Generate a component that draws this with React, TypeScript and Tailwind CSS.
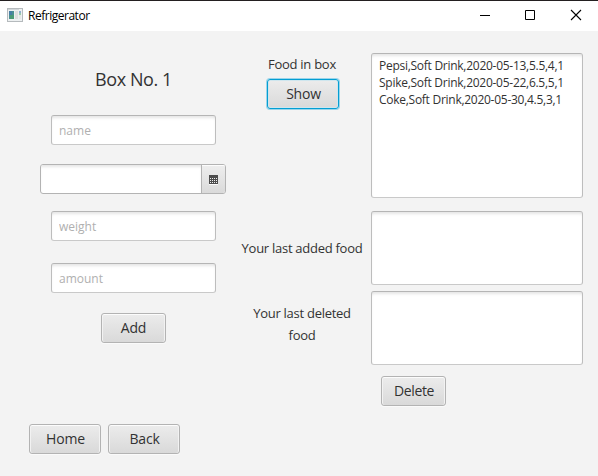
import type { ReactNode } from "react";

function Button({ children, className = "", focused = false }: { children: ReactNode; className?: string; focused?: boolean }) {
  const edge = focused
    ? "border-[#039ed3] shadow-[0_0_0_1px_#9bd5ea,inset_0_0_0_1px_#cfe6ee]"
    : "border-[#b3b3b3] shadow-[inset_0_1px_0_#fcfcfc,inset_1px_0_0_#f2f2f2,inset_-1px_0_0_#f2f2f2,0_1px_0_#fafafa]";
  return (
    <button
      className={`flex h-[30px] shrink-0 items-center justify-center whitespace-nowrap rounded-[3px] border bg-linear-to-b from-[#ececec] to-[#d9d9d9] pl-px text-[14px] leading-[20px] tracking-[-0.2px] text-[#323232] ${edge} ${className}`}
    >
      {children}
    </button>
  );
}

const fieldEdge =
  "rounded-[3px] border border-t-[#b5b5b5] border-x-[#bdbdbd] border-b-[#c9c9c9] bg-white shadow-[inset_0_3px_3px_-1px_#e6e6e6]";

function Field({ placeholder, className = "" }: { placeholder: string; className?: string }) {
  return (
    <input
      placeholder={placeholder}
      className={`block h-[30px] w-[165px] shrink-0 pl-[7.5px] pr-[7px] text-[12px] outline-none placeholder:text-[#b0b0b0] ${fieldEdge} ${className}`}
    />
  );
}

function DatePicker() {
  return (
    <div className="mt-[19px] flex h-[30px] w-[186px] shrink-0 overflow-hidden rounded-[3px] border border-[#b3b3b3] bg-white">
      <div className="flex-1 shadow-[inset_0_3px_3px_-1px_#e6e6e6]" />
      <div className="flex w-[24px] items-center justify-center border-l border-[#b3b3b3] bg-linear-to-b from-[#eeeeee] to-[#dadada] shadow-[inset_0_1px_0_#fcfcfc]">
        <svg width="9" height="10" viewBox="0 0 9 10" className="mt-[2px]" shapeRendering="crispEdges">
          <rect width="9" height="9" fill="#4d4d4d" />
          <rect y="9" width="9" height="1" fill="#fafafa" />
          {[3, 5, 7].map((y) =>
            [1, 3, 5, 7].map((x) => <rect key={`${x}-${y}`} x={x} y={y} width="1" height="1" fill="#eeeeee" />)
          )}
        </svg>
      </div>
    </div>
  );
}

function TitleBar() {
  return (
    <header className="flex h-[31px] items-center border-t border-[#231f20] bg-white pl-[7px] text-black">
      <svg width="16" height="14" viewBox="0 0 16 14" shapeRendering="crispEdges" className="mb-[2px]">
        <rect width="16" height="14" fill="#b5babd" />
        <rect x="1" y="1" width="14" height="12" fill="#edf0f1" />
        <rect x="1" y="1" width="11" height="1" fill="#d2d7da" />
        <rect x="2" y="3" width="5" height="8" fill="#4b8f91" />
        <rect x="2" y="3" width="3" height="4" fill="#477fa5" />
        <rect x="3" y="7" width="4" height="4" fill="#4c9a76" />
        <rect x="8" y="3" width="3" height="8" fill="#dedede" />
        <rect x="12" y="3" width="2" height="2" fill="#8eafd0" />
        <rect x="12" y="5" width="2" height="2" fill="#9accaa" />
        <rect x="12" y="7" width="2" height="4" fill="#e4e7e7" />
      </svg>
      <h1 className="ml-[5px] text-[12px] leading-[16px] tracking-[-0.48px]">Refrigerator</h1>
      <div className="ml-auto flex pb-[2px] pr-[15px]">
        <svg width="104" height="12" viewBox="0 0 104 12" fill="none" stroke="#000">
          <path d="M1 6.5h10" />
          <path d="M46.5 1.5h9v9h-9z" />
          <path d="M92 1l10 10M102 1l-10 10" strokeWidth="1.1" />
        </svg>
      </div>
    </header>
  );
}

const foods = ["Pepsi,Soft Drink,2020-05-13,5.5,4,1", "Spike,Soft Drink,2020-05-22,6.5,5,1", "Coke,Soft Drink,2020-05-30,4.5,3,1"];

export default function App() {
  return (
    <div className="flex h-[476px] w-[598px] flex-col overflow-hidden bg-[#f3f3f3] font-['Open_Sans','Noto_Sans',sans-serif] text-[#323232]">
      <TitleBar />
      <main className="flex flex-1">
        <section className="flex w-[241px] flex-col">
          <div className="ml-[40px] flex w-[186px] flex-col items-center">
            <h2 className="mt-[36px] h-[24px] whitespace-nowrap pl-px text-[18px] leading-[24px] tracking-[-0.4px]">Box No. 1</h2>
            <Field placeholder="name" className="mt-[24px]" />
            <DatePicker />
            <Field placeholder="weight" className="mt-[17px]" />
            <Field placeholder="amount" className="mt-[22px]" />
            <Button className="mt-[20px] w-[65px]">Add</Button>
          </div>
          <div className="ml-[29px] mt-[81px] flex gap-[7px]">
            <Button className="w-[72px]">Home</Button>
            <Button className="w-[72px]">Back</Button>
          </div>
        </section>
        <section className="flex w-[122px] flex-col items-center text-center text-[13px] leading-[22px] tracking-[-0.27px]">
          <p className="mt-[22px] h-[22px] whitespace-nowrap">Food in box</p>
          <Button focused className="ml-[2px] mt-[4px] w-[72px]">Show</Button>
          <p className="mt-[128px] h-[22px] whitespace-nowrap">Your last added food</p>
          <p className="mt-[43px]">
            Your last deleted
            <br />
            food
          </p>
        </section>
        <section className="ml-[8px] flex w-[212px] flex-col pt-[22px]">
          <div className={`h-[145px] shrink-0 px-[7px] pt-[3px] text-[12px] leading-[17px] tracking-[-0.27px] ${fieldEdge}`}>
            {foods.map((food) => (
              <div key={food} className="whitespace-nowrap">{food}</div>
            ))}
          </div>
          <div className={`mt-[13px] h-[74px] shrink-0 ${fieldEdge}`} />
          <div className={`mt-[6px] h-[74px] shrink-0 ${fieldEdge}`} />
          <Button className="ml-[10px] mt-[11px] w-[65px] tracking-[-0.4px]!">Delete</Button>
        </section>
      </main>
    </div>
  );
}
